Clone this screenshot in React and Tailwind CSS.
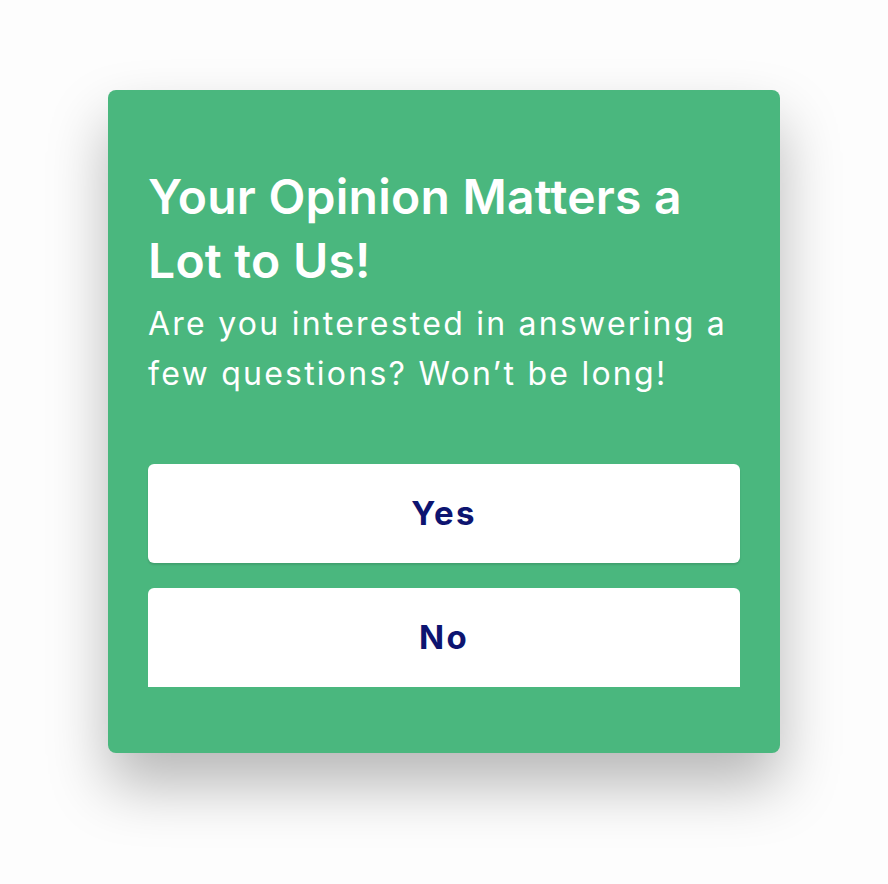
export default function App() {
  return (
    <div className="min-h-screen bg-[#fdfdfd] pt-[90px] pl-[108px]" style={{ fontFamily: "Inter, 'Noto Sans', sans-serif" }}>
      <div className="w-[672px] h-[663px] rounded-lg bg-[#4ab77e] shadow-[0_32px_60px_rgba(0,0,0,0.28)] px-10 pt-[75px] flex flex-col">
        <h1 className="text-[48px] leading-[64px] font-semibold tracking-[0.005em] text-white">
          Your Opinion Matters a Lot to Us!
        </h1>
        <p className="mt-[6px] text-[32px] leading-[50px] tracking-[0.07em] text-white">
          Are you interested in answering a few questions? Won’t be long!
        </p>
        <div className="mt-[65px] flex flex-col gap-[25px]">
          <button className="h-[99px] w-full rounded-md bg-white shadow-[0_2px_2px_rgba(0,0,0,0.12)] text-[33px] font-bold tracking-[0.07em] text-[#0d1470]">
            Yes
          </button>
          <button className="h-[99px] w-full rounded-t-md bg-white text-[33px] font-bold tracking-[0.07em] text-[#0d1470]">
            No
          </button>
        </div>
      </div>
    </div>
  );
}
